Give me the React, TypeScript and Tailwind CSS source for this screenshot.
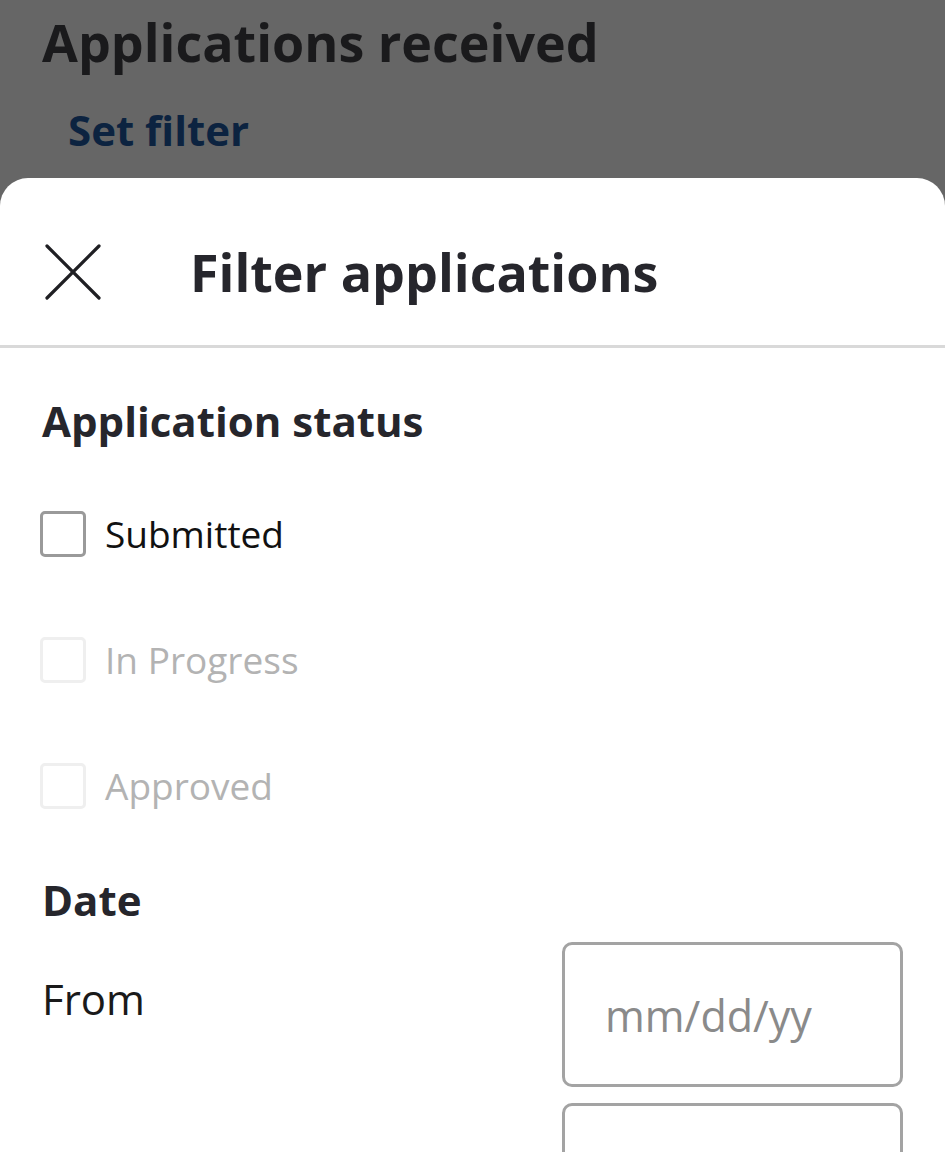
const statuses = [
  { label: "Submitted", enabled: true },
  { label: "In Progress", enabled: false },
  { label: "Approved", enabled: false },
]

function CloseIcon() {
  return (
    <svg width="58" height="58" viewBox="0 0 58 58" fill="none" stroke="#1f1f23" strokeWidth="3.2" strokeLinecap="round">
      <path d="M3 3L55 55M55 3L3 55" />
    </svg>
  )
}

export default function App() {
  return (
    <div className="relative h-[1152px] w-[945px] overflow-hidden bg-[#666666] font-['Open_Sans',sans-serif]">
      {/* Page behind the sheet */}
      <div className="h-[178px] px-[42px] pt-[6px]">
        <h1 className="text-[52px] font-bold leading-[72px] text-[#1a1a1c]">Applications received</h1>
        <button className="mt-[26px] pl-[26px] text-[42px] font-bold leading-[52px] text-[#0c2340]">Set filter</button>
      </div>

      {/* Filter sheet */}
      <div className="rounded-t-[28px] bg-white">
        <div className="flex h-[170px] items-center border-b-[3px] border-[#d9d9d9] pl-[44px] pt-[21px]">
          <CloseIcon />
          <h2 className="ml-[88px] text-[52px] font-bold text-[#26262c]">Filter applications</h2>
        </div>

        <div className="px-[42px]">
          <h3 className="mt-[46px] text-[42px] font-bold leading-[54px] text-[#26262c]">Application status</h3>

          <div className="mt-[63px] flex flex-col gap-[80px]">
            {statuses.map((s) => (
              <label key={s.label} className="flex h-[46px] items-center gap-[19px]">
                <span
                  className={
                    s.enabled
                      ? "ml-[-2px] h-[46px] w-[46px] shrink-0 rounded-[5px] border-[3px] border-[#9a9a9a] bg-white"
                      : "ml-[-2px] h-[46px] w-[46px] shrink-0 rounded-[5px] border-[3px] border-[#efefef] bg-white"
                  }
                />
                <span className={s.enabled ? "text-[37px] text-[#111111]" : "text-[37px] text-[#b3b3b3]"}>
                  {s.label}
                </span>
              </label>
            ))}
          </div>

          <h3 className="mt-[64px] text-[42px] font-bold leading-[54px] text-[#26262c]">Date</h3>

          <div className="mt-[15px] flex justify-between">
            <span className="mt-[25px] text-[42px] text-[#1a1a1a]">From</span>
            <div className="flex flex-col gap-[16px]">
              <div className="flex h-[145px] w-[341px] items-center rounded-[10px] border-[3px] border-[#a3a3a3] px-[40px] pt-[3px]">
                <span className="text-[43px] text-[#8a8a8a]">mm/dd/yy</span>
              </div>
              <div className="h-[145px] w-[341px] rounded-[10px] border-[3px] border-[#a3a3a3]" />
            </div>
          </div>
        </div>
      </div>
    </div>
  )
}
